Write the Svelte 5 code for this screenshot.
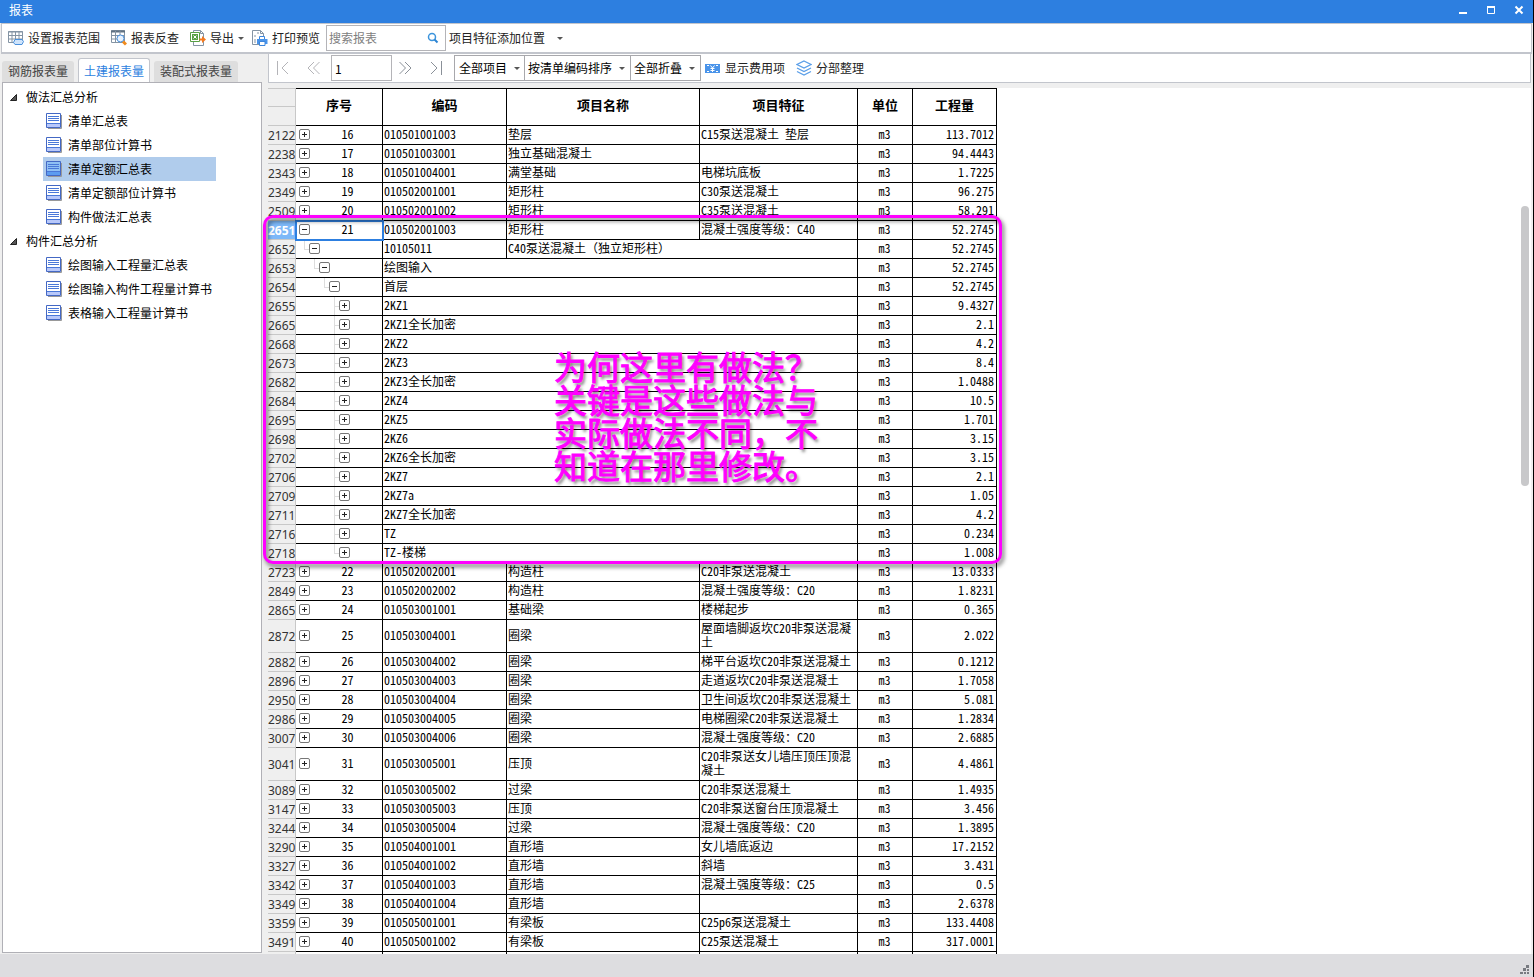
<script lang="ts">
  type Row = {
    line: number
    level?: number
    seq?: string
    code: string
    name?: string
    feature?: string
    amount: string
    open?: boolean
    last?: boolean
  }

  const item = (line: number, seq: number, code: string, name: string, feature: string, amount: string): Row =>
    ({ line, seq: String(seq), code, name, feature, amount })
  const part = (line: number, code: string, amount: string, last = false): Row =>
    ({ line, level: 4, code, amount, last })

  const rows: Row[] = [
    item(2122, 16, '010501001003', '垫层', 'C15泵送混凝土 垫层', '113.7012'),
    item(2238, 17, '010501003001', '独立基础混凝土', '', '94.4443'),
    item(2343, 18, '010501004001', '满堂基础', '电梯坑底板', '1.7225'),
    item(2349, 19, '010502001001', '矩形柱', 'C30泵送混凝土', '96.275'),
    item(2509, 20, '010502001002', '矩形柱', 'C35泵送混凝土', '58.291'),
    { ...item(2651, 21, '010502001003', '矩形柱', '混凝土强度等级：C40', '52.2745'), open: true },
    { line: 2652, level: 1, code: '10105011', name: 'C40泵送混凝土（独立矩形柱）', amount: '52.2745', open: true, last: true },
    { line: 2653, level: 2, code: '绘图输入', amount: '52.2745', open: true, last: true },
    { line: 2654, level: 3, code: '首层', amount: '52.2745', open: true, last: true },
    part(2655, '2KZ1', '9.4327'),
    part(2665, '2KZ1全长加密', '2.1'),
    part(2668, '2KZ2', '4.2'),
    part(2673, '2KZ3', '8.4'),
    part(2682, '2KZ3全长加密', '1.0488'),
    part(2684, '2KZ4', '10.5'),
    part(2695, '2KZ5', '1.701'),
    part(2698, '2KZ6', '3.15'),
    part(2702, '2KZ6全长加密', '3.15'),
    part(2706, '2KZ7', '2.1'),
    part(2709, '2KZ7a', '1.05'),
    part(2711, '2KZ7全长加密', '4.2'),
    part(2716, 'TZ', '0.234'),
    part(2718, 'TZ-楼梯', '1.008', true),
    item(2723, 22, '010502002001', '构造柱', 'C20非泵送混凝土', '13.0333'),
    item(2849, 23, '010502002002', '构造柱', '混凝土强度等级：C20', '1.8231'),
    item(2865, 24, '010503001001', '基础梁', '楼梯起步', '0.365'),
    item(2872, 25, '010503004001', '圈梁', '屋面墙脚返坎C20非泵送混凝土', '2.022'),
    item(2882, 26, '010503004002', '圈梁', '梯平台返坎C20非泵送混凝土', '0.1212'),
    item(2896, 27, '010503004003', '圈梁', '走道返坎C20非泵送混凝土', '1.7058'),
    item(2950, 28, '010503004004', '圈梁', '卫生间返坎C20非泵送混凝土', '5.081'),
    item(2986, 29, '010503004005', '圈梁', '电梯圈梁C20非泵送混凝土', '1.2834'),
    item(3007, 30, '010503004006', '圈梁', '混凝土强度等级：C20', '2.6885'),
    item(3041, 31, '010503005001', '压顶', 'C20非泵送女儿墙压顶压顶混凝土', '4.4861'),
    item(3089, 32, '010503005002', '过梁', 'C20非泵送混凝土', '1.4935'),
    item(3147, 33, '010503005003', '压顶', 'C20非泵送窗台压顶混凝土', '3.456'),
    item(3244, 34, '010503005004', '过梁', '混凝土强度等级：C20', '1.3895'),
    item(3290, 35, '010504001001', '直形墙', '女儿墙底返边', '17.2152'),
    item(3327, 36, '010504001002', '直形墙', '斜墙', '3.431'),
    item(3342, 37, '010504001003', '直形墙', '混凝土强度等级：C25', '0.5'),
    item(3349, 38, '010504001004', '直形墙', '', '2.6378'),
    item(3359, 39, '010505001001', '有梁板', 'C25p6泵送混凝土', '133.4408'),
    item(3491, 40, '010505001002', '有梁板', 'C25泵送混凝土', '317.0001'),
  ]

  const groups = [
    { title: '做法汇总分析', items: ['清单汇总表', '清单部位计算书', '清单定额汇总表', '清单定额部位计算书', '构件做法汇总表'] },
    { title: '构件汇总分析', items: ['绘图输入工程量汇总表', '绘图输入构件工程量计算书', '表格输入工程量计算书'] },
  ]
  const tabs = ['钢筋报表量', '土建报表量', '装配式报表量']

  let activeTab = $state('土建报表量')
  let activeReport = $state('清单定额汇总表')
  let selectedLine = $state(2651)
  let page = $state('1')
  let search = $state('')
</script>

<div class="window">
  <header class="title-bar">
    <h1>报表</h1>
    <div class="window-buttons">
      <button aria-label="最小化"><svg width="10" height="10" viewBox="0 0 10 10"><path d="M1 8h8" /></svg></button>
      <button aria-label="最大化"><svg width="10" height="10" viewBox="0 0 10 10"><path d="M1.500 2.500h7v6h-7z" stroke-width="1" /><path d="M1 2h8" /></svg></button>
      <button aria-label="关闭"><svg width="10" height="10" viewBox="0 0 10 10"><path d="M1.500 1.500l7 7M8.500 1.500l-7 7" /></svg></button>
    </div>
  </header>

  <div class="toolbar">
    <button class="tool">
      <svg width="16" height="16" viewBox="0 0 16 16">
        <path d="M.5 1.500h14v11H.5z" fill="#fff" stroke="#8494a4" />
        <path d="M0 2h15M0 5.500h15M0 9h15M4 1v11M7.500 1v11M11 1v11" stroke="#8494a4" />
        <path d="M7 9.500h7l1.500 2-1.500 3H7l-1.500-2z" fill="#cfe4fb" stroke="#4a90dc" />
      </svg>
      设置报表范围
    </button>
    <button class="tool">
      <svg width="16" height="16" viewBox="0 0 16 16">
        <path d="M.5.5h13v12H.5z" fill="#fff" stroke="#8494a4" />
        <path d="M0 1.500h14" stroke="#5f7182" stroke-width="2" />
        <path d="M0 5.500h14M0 9h14M4.500 1v11M9 1v11" stroke="#8494a4" />
        <circle cx="9.500" cy="8.500" r="3.500" fill="#e8f3ff" stroke="#4a90dc" />
        <path d="M12 11.500l3 3" stroke="#f08a1c" stroke-width="3" />
      </svg>
      报表反查
    </button>
    <button class="tool export">
      <svg width="16" height="16" viewBox="0 0 16 16">
        <path d="M3.500.5h7l3 3v12h-10z" fill="#fff" stroke="#8494a4" />
        <path d="M10.500.5v3h3" fill="none" stroke="#8494a4" />
        <path d="M.5 2.500h9v9h-9z" fill="#fff" stroke="#58a044" />
        <path d="M2 4h6v6H2z" fill="#58a044" />
        <path d="M3.500 5.500l3 3M6.500 5.500l-3 3" stroke="#fff" />
        <path d="M9.500 8.500H12V6l4 3.500-4 3.500v-2.500H9.500z" fill="#f47a20" />
      </svg>
      导出
      <span class="caret"></span>
    </button>
    <button class="tool print">
      <svg width="16" height="16" viewBox="0 0 16 16">
        <path d="M.5.5h8l3 3v11H.5z" fill="#fff" stroke="#8494a4" />
        <path d="M8.500.5v3h3" fill="none" stroke="#8494a4" />
        <path d="M2 6h2M2 10h2M2 12h2M5 3h2" stroke="#8494a4" />
        <path d="M7.500 6.500h5v3h-5z" fill="#fff" stroke="#3c86dc" />
        <path d="M5 9h10.500v5H5z" fill="#4a94ea" />
        <path d="M7.500 11.500h5.500v4H7.500z" fill="#fff" stroke="#3c86dc" />
      </svg>
      打印预览
    </button>
    <label class="search">
      <input type="text" placeholder="搜索报表" aria-label="搜索报表" bind:value={search} />
      <svg width="12" height="12" viewBox="0 0 12 12">
        <circle cx="5" cy="5" r="3.500" fill="none" stroke="#3c94dc" stroke-width="1.500" />
        <path d="M7.500 7.500l3 3" stroke="#2c84d4" stroke-width="2" />
      </svg>
    </label>
    <button class="tool wide">项目特征添加位置 <span class="caret"></span></button>
  </div>

  <div class="workspace">
    <aside class="sidebar">
      <div class="tabs" role="tablist">
        {#each tabs as tab}
          <button class="tab" class:active={tab === activeTab} role="tab" aria-selected={tab === activeTab} onclick={() => (activeTab = tab)}>{tab}</button>
        {/each}
      </div>
      <nav class="tree">
        {#each groups as group}
          <div class="group">
            <svg width="7" height="7" viewBox="0 0 7 7"><path d="M6.500.5v6h-6z" fill="#555" stroke="#222" /></svg>
            {group.title}
          </div>
          {#each group.items as report}
            <button class="report" class:active={report === activeReport} onclick={() => (activeReport = report)}>
              <svg width="16" height="16" viewBox="0 0 16 16">
                <path d="M2 15.500h13.500V2" fill="none" stroke="#999" />
                <path d="M.5.5h14v14H.5z" fill={report === activeReport ? '#8fc0f4' : '#fff'} stroke="#4468c4" />
                <path d="M1 11h13v3H1z" fill={report === activeReport ? '#5c9cf0' : '#b8c8fa'} />
                <path d="M2 3.500h11M2 5.500h11M2 7.500h11M1 10.500h13" stroke="#4a78d8" />
              </svg>
              {report}
            </button>
          {/each}
        {/each}
      </nav>
    </aside>

    <main class="main">
      <div class="toolbar pager">
        <button class="step" aria-label="第一页"><svg width="14" height="14" viewBox="0 0 14 14"><path d="M1.500 0v14M12 1L6 7l6 6" /></svg></button>
        <button class="step" aria-label="上一页"><svg width="14" height="14" viewBox="0 0 14 14"><path d="M7 1L1 7l6 6M12.500 1l-6 6 6 6" /></svg></button>
        <input class="page" type="text" aria-label="页码" bind:value={page} />
        <button class="step dark" aria-label="下一页"><svg width="14" height="14" viewBox="0 0 14 14"><path d="M1.500 1l6 6-6 6M7 1l6 6-6 6" /></svg></button>
        <button class="step dark" aria-label="最后一页"><svg width="14" height="14" viewBox="0 0 14 14"><path d="M2 1l6 6-6 6M12.500 0v14" /></svg></button>
        <div class="selects">
          <div class="select"><select aria-label="项目"><option>全部项目</option></select><span class="caret"></span></div>
          <div class="select"><select aria-label="排序"><option>按清单编码排序</option></select><span class="caret"></span></div>
          <div class="select"><select aria-label="折叠"><option>全部折叠</option></select><span class="caret"></span></div>
        </div>
        <button class="tool">
          <svg width="16" height="16" viewBox="0 0 16 16">
            <path d="M0 4h15v9H0z" fill="#4a94ea" />
            <path d="M2 5.500h2M2 11.500h2M11 5.500h2M11 11.500h2" stroke="#fff" />
            <path d="M5.500 5.500l2 2.500 2-2.500M7.500 8v4M5.500 8.500h4M5.500 10.500h4" fill="none" stroke="#fff" />
          </svg>
          显示费用项
        </button>
        <button class="tool">
          <svg width="16" height="16" viewBox="0 0 16 16" fill="none" stroke="#5a9ee8" stroke-width="1.300">
            <path d="M8 1l7 3.500L8 8 1 4.500z" />
            <path d="M1 8l7 3.500L15 8M1 11.500L8 15l7-3.500" />
          </svg>
          分部整理
        </button>
      </div>

      <div class="sheet">
        <table>
          <colgroup>
            <col class="c-line" /><col class="c-seq" /><col class="c-code" /><col class="c-name" />
            <col class="c-feature" /><col class="c-unit" /><col class="c-amount" />
          </colgroup>
          <thead>
            <tr>
              <td class="line corner"><span></span></td>
              <th>序号</th><th>编码</th><th>项目名称</th><th>项目特征</th><th>单位</th><th>工程量</th>
            </tr>
          </thead>
          <tbody>
            {#each rows as row (row.line)}
              {@const level = row.level ?? 0}
              <tr class:selected={row.line === selectedLine} onclick={() => (selectedLine = row.line)}>
                <td class="line">{row.line}</td>
                <td class="seq">
                  <div class="seq-box level-{level}">
                    {#if level > 0}
                      <span class="guide" class:last={row.last}></span>
                    {/if}
                    <button class="toggle" aria-label={row.open ? '折叠' : '展开'}>
                      <svg width="11" height="11" viewBox="0 0 11 11">
                        <rect x=".5" y=".5" width="10" height="10" rx="1.500" fill="#fff" stroke="#777" />
                        <path d={row.open ? 'M3 5.500h5' : 'M3 5.500h5M5.500 3v5'} stroke="#222" />
                      </svg>
                    </button>
                    <span class="seq-text">{row.seq ?? ''}</span>
                  </div>
                </td>
                {#if level > 1}
                  <td colspan="3">{row.code}</td>
                {:else if level === 1}
                  <td>{row.code}</td>
                  <td colspan="2">{row.name}</td>
                {:else}
                  <td>{row.code}</td>
                  <td>{row.name}</td>
                  <td>{row.feature}</td>
                {/if}
                <td class="unit">m3</td>
                <td class="amount">{row.amount}</td>
              </tr>
            {/each}
            <tr><td class="line"></td><td></td><td></td><td></td><td></td><td></td><td></td></tr>
          </tbody>
        </table>
        <div class="scrollbar"></div>
      </div>
    </main>

    <div class="note-frame"></div>
    <p class="note">为何这里有做法？<br />关键是这些做法与<br />实际做法不同，不<br />知道在那里修改。</p>
  </div>

  <footer class="status">
    <svg width="10" height="10" viewBox="0 0 10 10" fill="#777a80">
      <path d="M6 0h3v3H6zM3 3h3v3H3zM7 4h2v2H7zM0 7h3v2H0zM4 7h2v2H4zM7 7h2v2H7z" />
    </svg>
  </footer>
</div>

<style>
  :global(body) {
    margin: 0;
    overflow: hidden;
  }

  .window {
    box-sizing: border-box;
    display: flex;
    flex-direction: column;
    height: 100vh;
    border-right: 1px solid #000;
    background: #efefef;
    color: #000;
    font: 12px/18px 'Noto Sans CJK SC', sans-serif;
  }
  .window :global(*) {
    box-sizing: border-box;
  }
  svg {
    display: block;
    flex: none;
  }
  button,
  input,
  select {
    margin: 0;
    padding: 0;
    border: 0;
    background: none;
    color: inherit;
    font: inherit;
  }

  .title-bar {
    display: flex;
    flex: none;
    align-items: center;
    justify-content: space-between;
    height: 23px;
    padding: 0 9px;
    background: #2d7fe0;
    color: #fff;
  }
  h1 {
    margin: 0;
    padding-bottom: 4px;
    font-size: 12px;
    font-weight: 400;
  }
  .window-buttons {
    display: flex;
    gap: 18px;
    padding-bottom: 4px;
  }
  .window-buttons svg {
    fill: none;
    stroke: #fff;
    stroke-width: 2;
  }

  .toolbar {
    display: flex;
    flex: none;
    align-items: center;
    height: 31px;
    margin: 0 1px;
    padding-left: 6px;
    border: 1px solid #c2c5cc;
    border-bottom-width: 2px;
    background: #fff;
  }
  .tool {
    display: flex;
    align-items: center;
    gap: 4px;
    margin-right: 11px;
    white-space: nowrap;
    color: #222;
  }
  .tool.export {
    margin-right: 8px;
  }
  .tool.print {
    margin-right: 6px;
  }
  .tool.wide {
    gap: 12px;
    margin-left: 3px;
  }
  .caret {
    flex: none;
    border: 3px solid transparent;
    border-top-color: #555;
    border-bottom: 0;
  }
  .search {
    display: flex;
    align-items: center;
    width: 120px;
    height: 26px;
    padding-right: 6px;
    border: 1px solid #b4b4b8;
  }
  .search input {
    flex: 1;
    min-width: 0;
    padding-left: 2px;
    outline: 0;
  }
  .search input::placeholder {
    color: #808080;
    opacity: 1;
  }

  .workspace {
    position: relative;
    display: flex;
    flex: 1;
    min-height: 0;
    overflow: hidden;
  }
  .sidebar {
    display: flex;
    flex: none;
    flex-direction: column;
    width: 262px;
    padding: 0 0 1px 2px;
  }
  .tabs {
    display: flex;
    align-items: flex-end;
    height: 28px;
    gap: 4px;
  }
  .tab {
    height: 21px;
    padding: 0 6px 2px;
    border-radius: 3px 3px 0 0;
    background: #dedede;
    color: #444;
    white-space: nowrap;
  }
  .tab.active {
    height: 24px;
    padding: 0 5px;
    border: 1px solid #c2c5cc;
    border-bottom: 0;
    background: #fff;
    color: #2d7fe0;
  }
  .tree {
    flex: 1;
    padding: 2px 0;
    border: 1px solid #b0b0b6;
    background: #fff;
  }
  .group,
  .report {
    display: flex;
    align-items: center;
    height: 24px;
  }
  .group {
    gap: 9px;
    padding-left: 7px;
  }
  .report {
    width: 173px;
    gap: 6px;
    margin-left: 40px;
    padding-left: 3px;
    white-space: nowrap;
  }
  .report.active {
    background: #b0ccec;
  }

  .main {
    display: flex;
    flex: 1;
    flex-direction: column;
    min-width: 0;
    padding: 0 2px 0 6px;
  }
  .pager {
    height: 29px;
    margin: 0 0 5px;
    padding-left: 7px;
    border-top: 0;
    border-bottom-width: 1px;
  }
  .step {
    margin-right: 17px;
  }
  .step svg {
    fill: none;
    stroke: #b4b4b8;
  }
  .step.dark svg {
    stroke: #8a9098;
  }
  .step:has(+ .page) {
    margin-right: 10px;
  }
  .page {
    width: 61px;
    height: 26px;
    margin-right: 6px;
    padding-left: 3px;
    border: 1px solid #b4b4b8;
  }
  .selects {
    display: flex;
    margin: 0 4px 0 -6px;
  }
  .select {
    display: flex;
    align-items: center;
    height: 26px;
    padding: 0 4px;
    border: 1px solid #a8a8ac;
  }
  .select + .select {
    margin-left: -1px;
    padding: 0 5px 0 3px;
  }
  select {
    appearance: none;
    margin-right: 6px;
  }

  .sheet {
    display: flex;
    flex: 1;
    align-items: flex-start;
    justify-content: space-between;
    min-height: 0;
    overflow: hidden;
    background: #fff;
  }
  table {
    flex: none;
    width: 729px;
    border-spacing: 0;
    table-layout: fixed;
    font-family: 'Noto Sans Mono CJK SC', 'Noto Sans CJK SC', monospace;
  }
  .c-line { width: 28px; }
  .c-seq { width: 87px; }
  .c-code { width: 124px; }
  .c-name { width: 193px; }
  .c-feature { width: 158px; }
  .c-unit { width: 55px; }
  .c-amount { width: 84px; }
  th {
    height: 38px;
    padding: 0 0 5px;
    border: 1px solid #000;
    border-left: 0;
    font: bold 13px/18px 'Noto Sans CJK SC', sans-serif;
  }
  td {
    height: 19px;
    padding: 1px 2px 3px 1px;
    border: 1px solid #000;
    border-width: 0 1px 1px 0;
    line-height: 14px;
    vertical-align: middle;
  }
  .line {
    padding: 2px 0 0;
    border-color: #c8c8c8;
    background: #efefef;
    color: #333;
    font-family: 'Noto Sans', sans-serif;
  }
  .corner {
    padding: 0;
    border-top-width: 1px;
  }
  .corner span {
    display: block;
    height: 18px;
    margin-bottom: 18px;
    border-bottom: 1px solid #c8c8c8;
  }
  .seq {
    padding: 0;
  }
  .seq-box {
    display: flex;
    align-items: center;
    height: 18px;
    padding-left: 3px;
  }
  .level-1 { padding-left: 8px; }
  .level-2 { padding-left: 18px; }
  .level-3 { padding-left: 28px; }
  .level-4 { padding-left: 38px; }
  .guide {
    display: flex;
    flex: none;
    flex-direction: column;
    align-self: stretch;
    width: 5px;
  }
  .guide::before,
  .guide::after {
    content: '';
    flex: 1;
    border-left: 1px solid #ddd;
  }
  .guide::before {
    border-bottom: 1px solid #ddd;
  }
  .guide.last::after {
    border-color: transparent;
  }
  .toggle {
    height: 11px;
    margin-bottom: 1px;
  }
  .seq-text {
    flex: 1;
    padding: 0 0 2px 3px;
    text-align: center;
  }
  .unit {
    text-align: center;
  }
  .amount {
    text-align: right;
  }
  .selected .line {
    background: #7db8f8;
    color: #fff;
    font-weight: 700;
  }
  .selected .seq {
    outline: 2px solid #2d7fe0;
    outline-offset: -1px;
  }
  .scrollbar {
    width: 8px;
    height: 280px;
    margin: 118px 2px 0 0;
    border-radius: 4px;
    background: #c8c8ca;
  }

  .note-frame {
    position: absolute;
    top: 161px;
    left: 263px;
    width: 739px;
    height: 349px;
    border: 3px solid #f0f;
    border-radius: 10px;
    filter: drop-shadow(2px 3px 2px rgba(0, 0, 0, 0.6));
    pointer-events: none;
  }
  .note {
    position: absolute;
    top: 296px;
    left: 554px;
    margin: 0;
    color: #f0f;
    font-size: 33px;
    font-weight: 400;
    line-height: 33px;
    white-space: nowrap;
    -webkit-text-stroke: 1px #f0f;
    text-shadow: 2px 3px 3px rgba(0, 0, 0, 0.5);
    pointer-events: none;
  }

  .status {
    display: flex;
    flex: none;
    align-items: flex-end;
    justify-content: flex-end;
    height: 23px;
    padding: 0 3px 2px;
    background: #dddde0;
  }
</style>
